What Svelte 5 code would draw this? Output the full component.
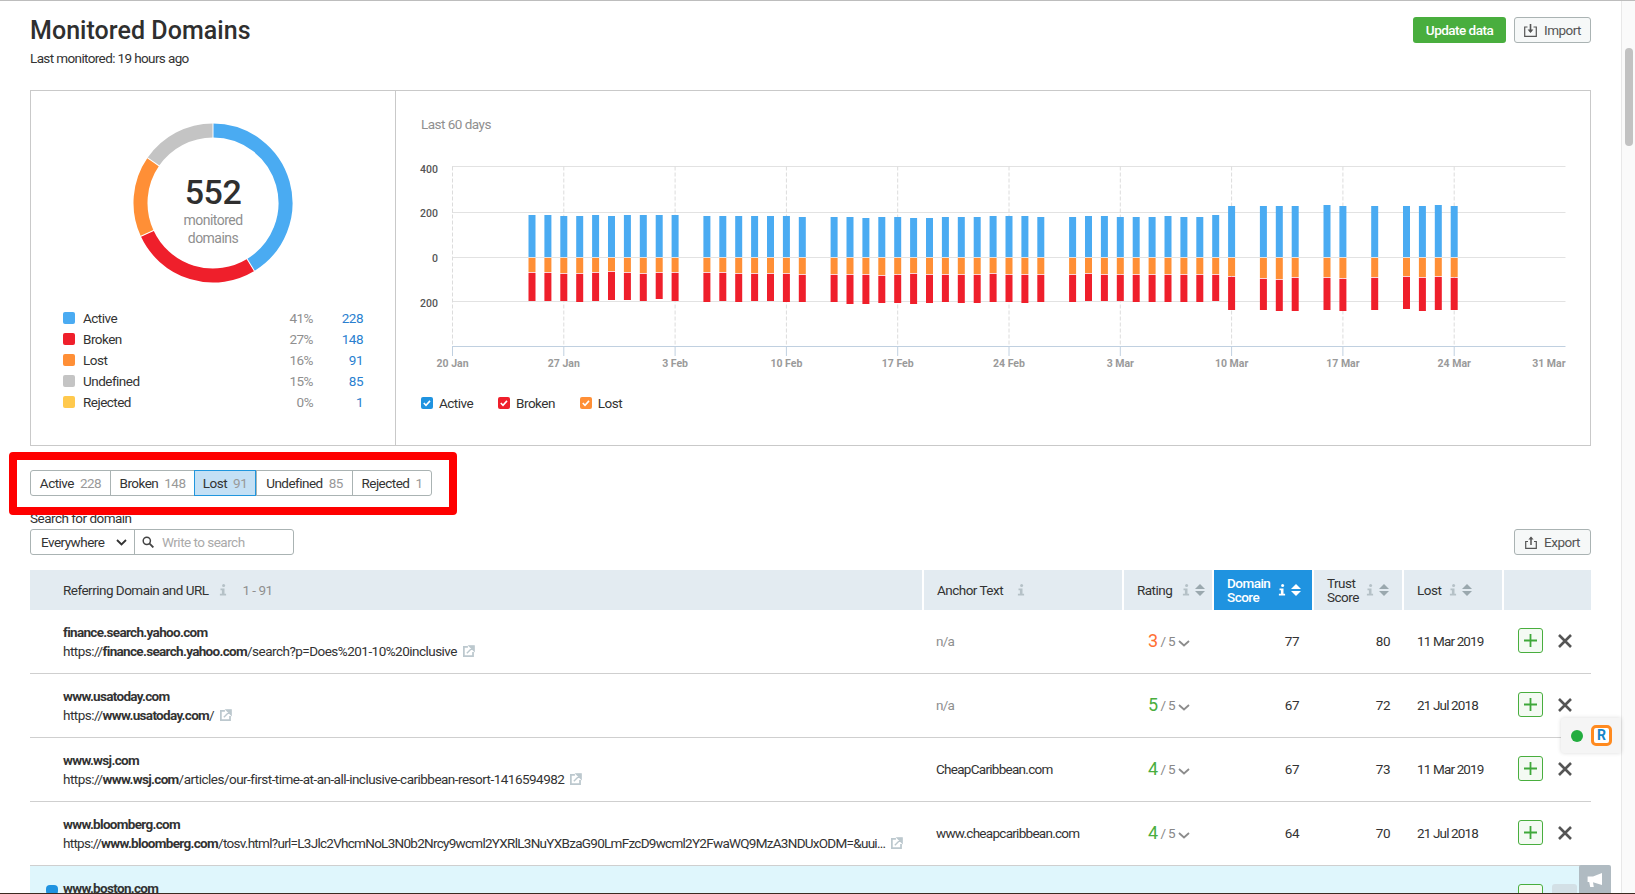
<script>
	const legend = [
		{ name: 'Active', color: '#4aabf2', pct: '41%', n: 228 },
		{ name: 'Broken', color: '#ef1f2b', pct: '27%', n: 148 },
		{ name: 'Lost', color: '#ff8f36', pct: '16%', n: 91 },
		{ name: 'Undefined', color: '#c4c4c4', pct: '15%', n: 85 },
		{ name: 'Rejected', color: '#ffc94d', pct: '0%', n: 1 }
	];
	const tabs = [
		{ name: 'Active', n: 228 },
		{ name: 'Broken', n: 148 },
		{ name: 'Lost', n: 91, on: true },
		{ name: 'Undefined', n: 85 },
		{ name: 'Rejected', n: 1 }
	];

	// donut slices, degrees from 12 o'clock
	const R = 72.5;
	function arc(a, b) {
		const p = (d) => {
			const t = ((d - 90) * Math.PI) / 180;
			return `${(80 + R * Math.cos(t)).toFixed(2)} ${(80 + R * Math.sin(t)).toFixed(2)}`;
		};
		return `M${p(a)}A${R} ${R} 0 ${b - a > 180 ? 1 : 0} 1 ${p(b)}`;
	}
	const slices = [
		{ c: '#4aabf2', a: 0, b: 148.7 },
		{ c: '#ef1f2b', a: 148.7, b: 245.2 },
		{ c: '#ff8f36', a: 245.2, b: 304.6 },
		{ c: '#c4c4c4', a: 304.6, b: 360 }
	];

	// chart: [day, top of blue, bottom of orange, bottom of red], tripled page pixels
	const days = [
		5, 6, 7, 8, 9, 10, 11, 12, 13, 14, 16, 17, 18, 19, 20, 21, 22, 24, 25, 26, 27, 28, 29, 30, 31, 32, 33, 34, 35, 36, 37,
		39, 40, 41, 42, 43, 44, 45, 46, 47, 48, 49, 51, 52, 53, 55, 56, 58, 60, 61, 62, 63
	];
	const tops = [
		648, 648, 651, 651, 648, 651, 648, 648, 648, 648, 651, 651, 651, 651, 651, 651, 654, 654, 654, 657, 654, 654, 657, 657,
		654, 654, 654, 651, 651, 651, 654, 654, 651, 651, 654, 654, 654, 651, 654, 654, 648, 621, 621, 621, 621, 618, 621, 621,
		621, 621, 618, 621
	];
	const mids = [
		819, 819, 822, 822, 819, 816, 819, 822, 819, 819, 819, 819, 822, 822, 822, 822, 825, 825, 825, 825, 828, 825, 822, 825,
		825, 825, 825, 822, 825, 825, 825, 825, 822, 825, 825, 825, 825, 825, 825, 825, 825, 831, 837, 840, 834, 834, 837, 834,
		831, 834, 831, 834
	];
	const bots = [
		906, 906, 906, 909, 906, 903, 903, 906, 900, 906, 909, 906, 909, 906, 906, 909, 909, 909, 915, 915, 912, 912, 915, 912,
		909, 912, 912, 909, 909, 912, 909, 909, 906, 906, 906, 909, 909, 909, 909, 909, 906, 933, 933, 936, 936, 933, 936, 933,
		930, 936, 933, 933
	];
	const bars = days.map((d, i) => ({
		x: 452.5 + d * 15.9 - 3.5,
		top: tops[i] / 3,
		mid: mids[i] / 3,
		bot: bots[i] / 3
	}));
	const ticks = ['20 Jan', '27 Jan', '3 Feb', '10 Feb', '17 Feb', '24 Feb', '3 Mar', '10 Mar', '17 Mar', '24 Mar', '31 Mar'];
	const tickX = (i) => 452.5 + i * 111.3;
	const grid = [167.5, 213.5, 258.5, 302.5];

	const rows = [
		{
			domain: 'finance.search.yahoo.com',
			pre: 'https://',
			host: 'finance.search.yahoo.com',
			rest: '/search?p=Does%201-10%20inclusive',
			anchor: 'n/a',
			rating: 3,
			ds: 77,
			ts: 80,
			date: '11 Mar 2019'
		},
		{
			domain: 'www.usatoday.com',
			pre: 'https://',
			host: 'www.usatoday.com',
			rest: '/',
			anchor: 'n/a',
			rating: 5,
			ds: 67,
			ts: 72,
			date: '21 Jul 2018'
		},
		{
			domain: 'www.wsj.com',
			pre: 'https://',
			host: 'www.wsj.com',
			rest: '/articles/our-first-time-at-an-all-inclusive-caribbean-resort-1416594982',
			anchor: 'CheapCaribbean.com',
			rating: 4,
			ds: 67,
			ts: 73,
			date: '11 Mar 2019'
		},
		{
			domain: 'www.bloomberg.com',
			pre: 'https://',
			host: 'www.bloomberg.com',
			rest: '/tosv.html?url=L3Jlc2VhcmNoL3N0b2Nrcy9wcml2YXRlL3NuYXBzaG90LmFzcD9wcml2Y2FwaWQ9MzA3NDUxODM=&uui...',
			anchor: 'www.cheapcaribbean.com',
			rating: 4,
			ds: 64,
			ts: 70,
			date: '21 Jul 2018'
		}
	];
</script>

{#snippet info(light)}
	<svg class="info" class:light width="8" height="12" viewBox="0 0 8 12">
		<circle cx="4.6" cy="1.6" r="1.5" />
		<path d="M1.5 4.6h4v5.2h1.6v1.8H.9V9.8h2V6.2H1.5z" />
	</svg>
{/snippet}

{#snippet sort(light)}
	<svg class="sort" class:light width="10" height="12" viewBox="0 0 10 12">
		<path d="M5 0l5 5H0z" />
		<path d="M0 7h10l-5 5z" />
	</svg>
{/snippet}

{#snippet ext()}
	<svg class="ext" width="12" height="12" viewBox="0 0 11 11">
		<path d="M4.5 1.8H.8v8.4h8.4V6.5" fill="none" stroke="currentColor" stroke-width="1.6" />
		<path d="M3.5 7.5L9 2M5.8 .8h4.4v4.4z" fill="currentColor" stroke="currentColor" stroke-width="1.3" />
	</svg>
{/snippet}

<div class="page">
	<div class="content">
		<header class="top">
			<div>
				<h1>Monitored Domains</h1>
				<p class="sub">Last monitored: 19 hours ago</p>
			</div>
			<div class="top-btns">
				<button class="green">Update data</button>
				<button class="plain">
					<svg width="13" height="13" viewBox="0 0 13 13" fill="none" stroke="#555" stroke-width="1.2">
						<path d="M3.5 3H.7v9.3h11.6V3H9.5" />
						<path d="M6.5 0v8" stroke-width="1.6" />
						<path d="M3.6 5.6h5.8L6.5 9z" fill="#555" stroke="none" />
					</svg>
					Import
				</button>
			</div>
		</header>

		<section class="panel">
			<div class="summary">
				<div class="donut">
					<svg width="160" height="160" viewBox="0 0 160 160">
						{#each slices as s}
							<path d={arc(s.a, s.b)} fill="none" stroke={s.c} stroke-width="14" />
						{/each}
						{#each slices as s}
							<line x1="80" y1="0" x2="80" y2="17" stroke="#fff" transform="rotate({s.a} 80 80)" />
						{/each}
					</svg>
					<div class="donut-text">
						<b>552</b>
						<span>monitored<br />domains</span>
					</div>
				</div>
				<ul class="legend">
					{#each legend as l}
						<li>
							<i style="background:{l.color}"></i>
							<span class="lname">{l.name}</span>
							<span class="lpct">{l.pct}</span>
							<span class="lnum">{l.n}</span>
						</li>
					{/each}
				</ul>
			</div>

			<div class="chart">
				<div class="chart-title">Last 60 days</div>
				<svg class="plot" width="1160" height="230" viewBox="415 150 1160 230">
					{#each grid as y}
						<line x1="452" x2="1565.5" y1={y} y2={y} stroke="#e2e2e2" />
					{/each}
					{#each ticks as t, i}
						{#if i < 10}
							<line x1={tickX(i)} x2={tickX(i)} y1="167.5" y2="347" stroke="#dcdcdc" stroke-dasharray="4 2" />
							<line x1={tickX(i)} x2={tickX(i)} y1="347" y2="357" stroke="#c0d0e0" />
						{/if}
						<text class="tick" x={i < 10 ? tickX(i) : 1565.5} y="368" text-anchor={i < 10 ? 'middle' : 'end'}>{t}</text>
					{/each}
					<line x1="452" x2="1565.5" y1="347.5" y2="347.5" stroke="#c0d0e0" />
					<text class="yl" x="438" y="173.5">400</text>
					<text class="yl" x="438" y="218">200</text>
					<text class="yl" x="438" y="263">0</text>
					<text class="yl" x="438" y="308">200</text>
					{#each bars as b}
						<rect x={b.x} y={b.top} width="7" height={258 - b.top} fill="#4aabf2" />
						<rect x={b.x} y="259" width="7" height={b.mid - 259} fill="#ff8f36" />
						<rect x={b.x} y={b.mid + 0.8} width="7" height={b.bot - b.mid - 0.8} fill="#ef1f2b" />
					{/each}
				</svg>
				<div class="checks">
					{#each [{ n: 'Active', c: '#1f93e0' }, { n: 'Broken', c: '#ef1f2b' }, { n: 'Lost', c: '#ff8f36' }] as c}
						<label>
							<span class="box" style="background:{c.c}">
								<svg width="12" height="12" viewBox="0 0 12 12"><path d="M2.8 6l2.2 2.3 4-4.4" fill="none" stroke="#fff" stroke-width="1.6" /></svg>
							</span>
							{c.n}
						</label>
					{/each}
				</div>
			</div>
		</section>

		<div class="tabs-wrap">
			<div class="tabs">
				{#each tabs as t}
					<span class="tab" class:on={t.on}>{t.name}<em>{t.n}</em></span>
				{/each}
			</div>
			<div class="annotation"></div>
		</div>

		<div class="search-label">Search for domain</div>
		<div class="tools">
			<div class="search">
				<div class="select">
					Everywhere
					<svg width="11" height="7" viewBox="0 0 11 7"><path d="M1 1l4.5 4.5L10 1" fill="none" stroke="#333" stroke-width="1.8" /></svg>
				</div>
				<div class="input">
					<svg width="12" height="12" viewBox="0 0 12 12" fill="none" stroke="#444" stroke-width="1.5">
						<circle cx="4.8" cy="4.8" r="3.6" />
						<path d="M7.6 7.6l3.8 3.8" stroke-width="1.9" />
					</svg>
					<span>Write to search</span>
				</div>
			</div>
			<button class="plain">
				<svg width="12" height="13" viewBox="0 0 12 13" fill="none" stroke="#555" stroke-width="1.2">
					<path d="M3 5.5H.7v6.8h10.6V5.5H9" />
					<path d="M6 9V1.5" stroke-width="1.5" />
					<path d="M3.4 3.6h5.2L6 .4z" fill="#555" stroke="none" />
				</svg>
				Export
			</button>
		</div>

		<div class="thead grid-cols">
			<div class="th first">
				<span>Referring Domain and URL</span>
				{@render info(false)}
				<span class="range">1 - 91</span>
			</div>
			<div class="th anchor-h">
				<span>Anchor Text</span>
				{@render info(false)}
			</div>
			<div class="th"><span class="w-rating">Rating</span>{@render info(false)}{@render sort(false)}</div>
			<div class="th active"><span class="w-domain">Domain Score</span>{@render info(true)}{@render sort(true)}</div>
			<div class="th"><span class="w-trust">Trust Score</span>{@render info(false)}{@render sort(false)}</div>
			<div class="th"><span class="w-lost">Lost</span>{@render info(false)}{@render sort(false)}</div>
			<div class="th"></div>
		</div>

		{#each rows as r}
			<div class="row grid-cols">
				<div class="td-main">
					<div class="domain">{r.domain}</div>
					<div class="url" class:long={r.rest.length > 80}>{r.pre}<b>{r.host}</b>{r.rest}{@render ext()}</div>
				</div>
				<div class="td anchor" class:na={r.anchor === 'n/a'}>{r.anchor}</div>
				<div class="td rating">
					<span class="num" class:low={r.rating === 3}>{r.rating}</span>
					<span class="of">/ 5</span>
					<svg width="12" height="7" viewBox="0 0 12 7"><path d="M1 1l5 4.5L11 1" fill="none" stroke="#8c8c8c" stroke-width="1.8" /></svg>
				</div>
				<div class="td score">{r.ds}</div>
				<div class="td score trust">{r.ts}</div>
				<div class="td date">{r.date}</div>
				<div class="td actions">
					<span class="plus">
						<svg width="13" height="13" viewBox="0 0 13 13"><path d="M6.5 0v13M0 6.5h13" stroke="#3fa83a" stroke-width="1.8" /></svg>
					</span>
					<svg class="x" width="14" height="14" viewBox="0 0 14 14"><path d="M1 1l12 12M13 1L1 13" stroke="#555" stroke-width="2.6" /></svg>
				</div>
			</div>
		{/each}

		<div class="row grid-cols hl">
			<div class="td-main">
				<div class="domain"><i class="dot"></i>www.boston.com</div>
			</div>
			<div class="td"></div>
			<div class="td"></div>
			<div class="td"></div>
			<div class="td"></div>
			<div class="td"></div>
			<div class="td actions">
				<span class="plus"></span>
				<span class="x-box"></span>
			</div>
		</div>
	</div>

	<div class="scrollbar"><div class="thumb"></div></div>

	<div class="widget">
		<span class="led"></span>
		<span class="rlogo">R</span>
	</div>
	<div class="feedback">
		<svg width="16" height="15" viewBox="0 0 16 15"><path d="M15 0v12L6 9.3 6.8 14H3.2L2.2 9H.6V3.4H6z" fill="#fff" /></svg>
	</div>
	<div class="bottom-line"></div>
</div>

<style>
	:global(body) {
		overflow: hidden;
		background: #fff;
	}

	.page {
		position: relative;
		display: flex;
		width: 1635px;
		height: 894px;
		overflow: hidden;
		box-sizing: border-box;
		border-top: 1px solid #bdbdbd;
		font-family: Roboto, 'Noto Sans', sans-serif;
		font-size: 13.5px;
		letter-spacing: -0.52px;
		color: #333;
	}

	.content {
		width: 1621px;
		box-sizing: border-box;
		padding: 0 30px;
		flex: none;
	}

	.scrollbar {
		flex: 1;
		border-left: 1px solid #e8e8e8;
		background: #fafafa;
	}

	.thumb {
		width: 8px;
		height: 98px;
		margin: 47px 0 0 3px;
		border-radius: 4px;
		background: #c2c2c2;
	}

	.top {
		display: flex;
		justify-content: space-between;
		height: 89px;
	}

	h1 {
		margin: 0;
		padding-top: 14px;
		font-size: 25px;
		font-weight: 500;
		line-height: 32px;
		color: #2f2f2f;
		letter-spacing: 0.05px;
	}

	.sub {
		margin: 2px 0 0;
		line-height: 18px;
		letter-spacing: -0.62px;
	}

	.top-btns {
		display: flex;
		gap: 8px;
		padding-top: 16px;
	}

	button {
		height: 26px;
		box-sizing: border-box;
		border-radius: 3px;
		font: inherit;
		letter-spacing: inherit;
		padding: 0;
		display: inline-flex;
		align-items: center;
		justify-content: center;
	}

	.green {
		width: 93px;
		border: 0;
		background: #49ae3e;
		color: #fff;
		font-weight: 500;
	}

	.plain {
		width: 77px;
		gap: 7px;
		border: 1px solid #aab3b3;
		background: #f6f8f8;
		color: #555;
	}

	.panel {
		display: flex;
		height: 356px;
		box-sizing: border-box;
		border: 1px solid #c9c9c9;
	}

	.summary {
		width: 364px;
		flex: none;
		border-right: 1px solid #c9c9c9;
		padding-top: 32px;
	}

	.donut {
		position: relative;
		width: 160px;
		height: 160px;
		margin: 0 auto;
	}

	.donut svg {
		display: block;
	}

	.donut-text {
		position: absolute;
		inset: 0;
		display: flex;
		flex-direction: column;
		align-items: center;
		padding-top: 50px;
		box-sizing: border-box;
		text-align: center;
	}

	.donut-text b {
		font-size: 34px;
		font-weight: 500;
		line-height: 38px;
		color: #2f2f2f;
	}

	.donut-text span {
		font-size: 14px;
		line-height: 18px;
		color: #8f8f8f;
	}

	.legend {
		list-style: none;
		margin: 24px 32px 0;
		padding: 0;
	}

	.legend li {
		display: flex;
		align-items: center;
		height: 21px;
	}

	.legend i {
		width: 12px;
		height: 12px;
		border-radius: 2px;
		margin-right: 8px;
	}

	.lname {
		flex: 1;
	}

	.lpct {
		color: #8f8f8f;
	}

	.lnum {
		width: 50px;
		text-align: right;
		color: #2a7fd0;
	}

	.chart {
		flex: 1;
		min-width: 0;
		padding-left: 25px;
	}

	.chart-title {
		padding-top: 24px;
		height: 34px;
		line-height: 18px;
		color: #8f8f8f;
	}

	.plot {
		display: block;
		margin: 0 0 0 -6px;
	}

	.tick {
		font-size: 10.5px;
		font-weight: 700;
		fill: #9a9a9a;
		letter-spacing: 0;
	}

	.yl {
		font-size: 10.5px;
		font-weight: 500;
		fill: #555;
		text-anchor: end;
		letter-spacing: 0;
	}

	.checks {
		display: flex;
		height: 18px;
		margin-top: 15px;
		align-items: center;
	}

	.checks label {
		display: flex;
		align-items: center;
		gap: 6px;
		margin-right: 25px;
	}

	.box {
		width: 12px;
		height: 12px;
		border-radius: 2px;
		display: block;
	}

	.box svg {
		display: block;
	}

	.tabs-wrap {
		position: relative;
		display: inline-block;
		margin-top: 24px;
		vertical-align: top;
	}

	.tabs {
		display: flex;
		height: 26px;
		box-sizing: border-box;
		border: 1px solid #aab3b3;
		border-radius: 3px;
		width: 402px;
	}

	.tab {
		display: flex;
		align-items: center;
		justify-content: center;
		gap: 6px;
		box-sizing: border-box;
		border-left: 1px solid #aab3b3;
	}

	.tab:nth-child(1) {
		width: 79px;
		border-left: 0;
	}
	.tab:nth-child(2) {
		width: 84px;
	}
	.tab:nth-child(3) {
		width: 62px;
	}
	.tab:nth-child(4) {
		width: 96px;
	}
	.tab:nth-child(5) {
		flex: 1;
	}

	.tab em {
		font-style: normal;
		color: #999;
	}

	.tab.on {
		background: #c4e0f5;
		outline: 1px solid #2196dd;
		outline-offset: -1px;
		margin: -1px 0;
		height: 26px;
		border: 0;
	}

	.annotation {
		position: absolute;
		left: -21px;
		right: -25px;
		top: -18px;
		bottom: -19px;
		border: 8px solid #fe0000;
		border-radius: 4px;
		pointer-events: none;
		z-index: 2;
	}

	.search-label {
		margin-top: 13px;
		line-height: 18px;
		height: 20px;
	}

	.tools {
		display: flex;
		justify-content: space-between;
		height: 26px;
	}

	.search {
		display: flex;
		width: 264px;
		height: 26px;
		box-sizing: border-box;
		border: 1px solid #aab3b3;
		border-radius: 3px;
	}

	.select {
		width: 104px;
		flex: none;
		box-sizing: border-box;
		display: flex;
		align-items: center;
		justify-content: space-between;
		padding: 0 7px 0 10px;
		border-right: 1px solid #aab3b3;
	}

	.input {
		display: flex;
		align-items: center;
		gap: 8px;
		padding-left: 7px;
		color: #aaa;
	}

	.thead {
		margin-top: 15px;
		height: 40px;
		background: #e3ebf1;
	}

	.grid-cols {
		display: grid;
		grid-template-columns: 893px 200px 90px 100px 90px 100px 88px;
	}

	.th {
		display: flex;
		align-items: center;
		padding-left: 13px;
		border-left: 2px solid #fff;
		margin-left: -1px;
		line-height: 14px;
	}

	.th.first {
		padding-left: 33px;
		border-left: 0;
		margin-left: 0;
	}

	.th .info {
		margin-right: 5px;
	}

	.first .info {
		margin: 0 15px 0 11px;
	}

	.anchor-h .info {
		margin-left: 14px;
	}

	.range {
		color: #8f8f8f;
	}

	.w-rating {
		width: 45px;
	}
	.w-domain {
		width: 51px;
	}
	.w-trust {
		width: 39px;
	}
	.w-lost {
		width: 32px;
	}

	.th.active {
		background: #1f93e0;
		color: #fff;
		font-weight: 500;
	}

	.info {
		fill: #b5c1c7;
		flex: none;
	}

	.info.light {
		fill: #fff;
	}

	.sort {
		fill: #9aa8ae;
		flex: none;
	}

	.sort.light {
		fill: #fff;
	}

	.row {
		height: 64px;
		box-sizing: border-box;
		border-bottom: 1px solid #cfcfcf;
	}

	.td-main {
		padding: 13px 0 0 33px;
		position: relative;
	}

	.domain {
		font-weight: 700;
		line-height: 19px;
		letter-spacing: -0.68px;
	}

	.url {
		line-height: 19px;
		white-space: nowrap;
	}

	.url.long {
		letter-spacing: -0.72px;
	}

	.url b {
		font-weight: 700;
		letter-spacing: -0.68px;
	}

	.ext {
		color: #bcc8ce;
		margin-left: 6px;
		vertical-align: -1px;
	}

	.td {
		display: flex;
		align-items: center;
		padding-bottom: 2px;
	}

	.anchor {
		padding-left: 13px;
		letter-spacing: -0.72px;
	}

	.anchor.na {
		color: #8f8f8f;
	}

	.rating {
		padding-left: 25px;
		gap: 3px;
	}

	.num {
		font-size: 18px;
		color: #49ae3e;
	}

	.num.low {
		color: #ff6f33;
	}

	.of {
		color: #888;
		letter-spacing: -0.8px;
	}

	.rating svg {
		margin-top: 6px;
	}

	.score {
		justify-content: flex-end;
		padding-right: 14px;
	}

	.trust {
		padding-right: 13px;
	}

	.date {
		padding-left: 14px;
		letter-spacing: -0.85px;
	}

	.actions {
		padding-left: 15px;
		gap: 15px;
	}

	.plus {
		width: 25px;
		height: 25px;
		box-sizing: border-box;
		border: 1px solid #49ae3e;
		border-radius: 3px;
		background: #f4faf3;
		display: flex;
		align-items: center;
		justify-content: center;
		flex: none;
	}

	.hl {
		background: #dff6fc;
		border: 0;
		height: 30px;
		overflow: hidden;
	}

	.hl .td {
		align-items: flex-start;
		padding-top: 18px;
	}

	.dot {
		position: absolute;
		left: 16px;
		top: 19px;
		width: 12px;
		height: 10px;
		border-radius: 4px;
		background: #1f93e0;
	}

	.x-box {
		width: 25px;
		height: 25px;
		margin-left: -6px;
		border-radius: 3px;
		background: #d3e0e6;
	}

	.widget {
		position: absolute;
		left: 1561px;
		top: 717px;
		width: 60px;
		height: 35px;
		background: #f5f5f5;
		border-radius: 3px 0 0 3px;
		box-shadow: 0 0 4px rgba(0, 0, 0, 0.15);
		display: flex;
		align-items: center;
		padding-left: 10px;
		gap: 8px;
		box-sizing: border-box;
	}

	.led {
		width: 12px;
		height: 12px;
		border-radius: 50%;
		background: #23ad3f;
	}

	.rlogo {
		width: 21px;
		height: 21px;
		box-sizing: border-box;
		border: 3px solid #ff8a1f;
		border-radius: 5px;
		background: #fff;
		color: #1585c8;
		font-weight: 700;
		font-size: 14px;
		line-height: 15px;
		text-align: center;
		letter-spacing: 0;
	}

	.feedback {
		position: absolute;
		left: 1579px;
		top: 864px;
		width: 32px;
		height: 30px;
		background: #b0bbc2;
		border-radius: 2px 2px 0 0;
		display: flex;
		align-items: center;
		justify-content: center;
	}

	.bottom-line {
		position: absolute;
		left: 0;
		right: 0;
		bottom: 0;
		height: 1px;
		background: #3a2a20;
	}
</style>
